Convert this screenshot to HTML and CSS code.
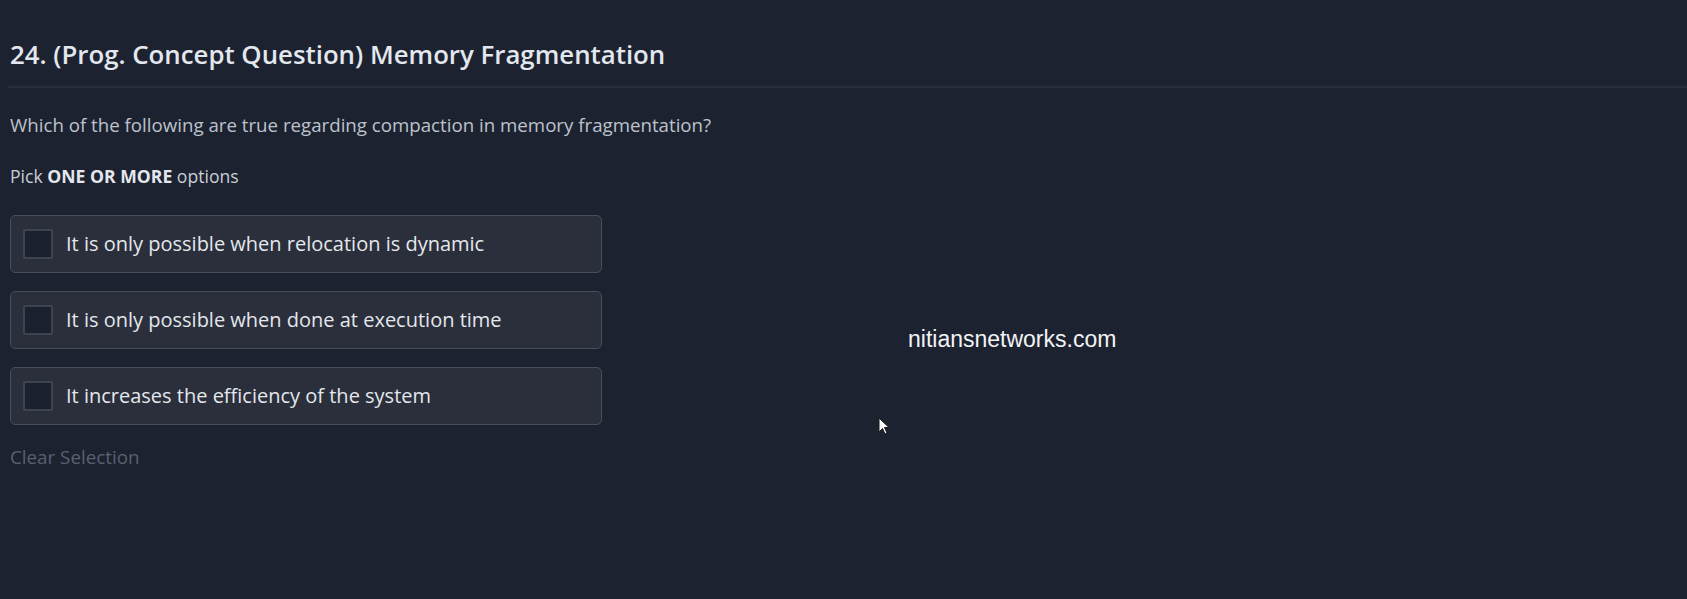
FILE: index.html
```html
<!DOCTYPE html>
<html>
<head>
<meta charset="utf-8">
<link rel="stylesheet" href="styles.css">
</head>
<body>
<div class="page">
  <header class="head">
    <h1 class="title">24. (Prog. Concept Question) Memory Fragmentation</h1>
  </header>
  <div class="content">
    <p class="question">Which of the following are true regarding compaction in memory fragmentation?</p>
    <p class="pick">Pick <b>ONE OR MORE</b> options</p>
    <div class="options">
      <label class="option"><span class="check"></span><span class="otext">It is only possible when relocation is dynamic</span></label>
      <label class="option"><span class="check"></span><span class="otext">It is only possible when done at execution time</span></label>
      <label class="option"><span class="check"></span><span class="otext">It increases the efficiency of the system</span></label>
    </div>
    <div class="clear">Clear Selection</div>
  </div>
  <div class="watermark">nitiansnetworks.com</div>
  <svg class="cursor" width="12" height="18" viewBox="0 0 12 18"><path d="M1 1 L1 15 L4.5 11.5 L7 17 L9 16 L6.5 10.5 L11 10.5 Z" fill="#ffffff" stroke="#1a1a1a" stroke-width="1"/></svg>
</div>
</body>
</html>
```
FILE: styles.css
```css
* { box-sizing: border-box; }
html, body { margin: 0; padding: 0; }
body {
  background: #1d2230;
  font-family: "Open Sans", "Noto Sans", sans-serif;
  width: 1687px;
  height: 599px;
  overflow: hidden;
}
.page { position: relative; width: 1687px; height: 599px; }
.head {
  padding: 37px 0 14px 2px;
  margin-left: 8px;
  border-bottom: 2px solid #282e3b;
}
.title {
  margin: 0;
  font-size: 25.8px;
  line-height: 35px;
  font-weight: 600;
  color: #e3e7ee;
}
.content { padding-left: 10px; }
.question {
  margin: 24px 0 0 0;
  font-size: 18.7px;
  line-height: 26px;
  color: #bcc2cc;
}
.pick {
  margin: 26px 0 0 0;
  font-size: 17.6px;
  line-height: 24px;
  color: #c9ced6;
}
.pick b { font-weight: 700; color: #e3e7ee; }
.options {
  margin-top: 27px;
  display: flex;
  flex-direction: column;
  gap: 18px;
  width: 592px;
}
.option {
  display: flex;
  align-items: center;
  height: 58px;
  padding-left: 12px;
  background: #2a2f3b;
  border: 1px solid #474d59;
  border-radius: 5px;
}
.check {
  width: 30px;
  height: 30px;
  background: #1c2130;
  border: 2px solid #3d4451;
  border-radius: 2px;
  flex: none;
}
.otext {
  margin-left: 13px;
  font-size: 20px;
  line-height: 26px;
  color: #e4e7ec;
}
.clear {
  margin-top: 19px;
  font-size: 18.8px;
  line-height: 26px;
  color: #596070;
}
.watermark {
  position: absolute;
  left: 908px;
  top: 325px;
  font-family: "Liberation Sans", Arial, sans-serif;
  font-size: 23px;
  line-height: 28px;
  color: #f2f3f5;
}
.cursor {
  position: absolute;
  left: 878px;
  top: 417px;
}
```
